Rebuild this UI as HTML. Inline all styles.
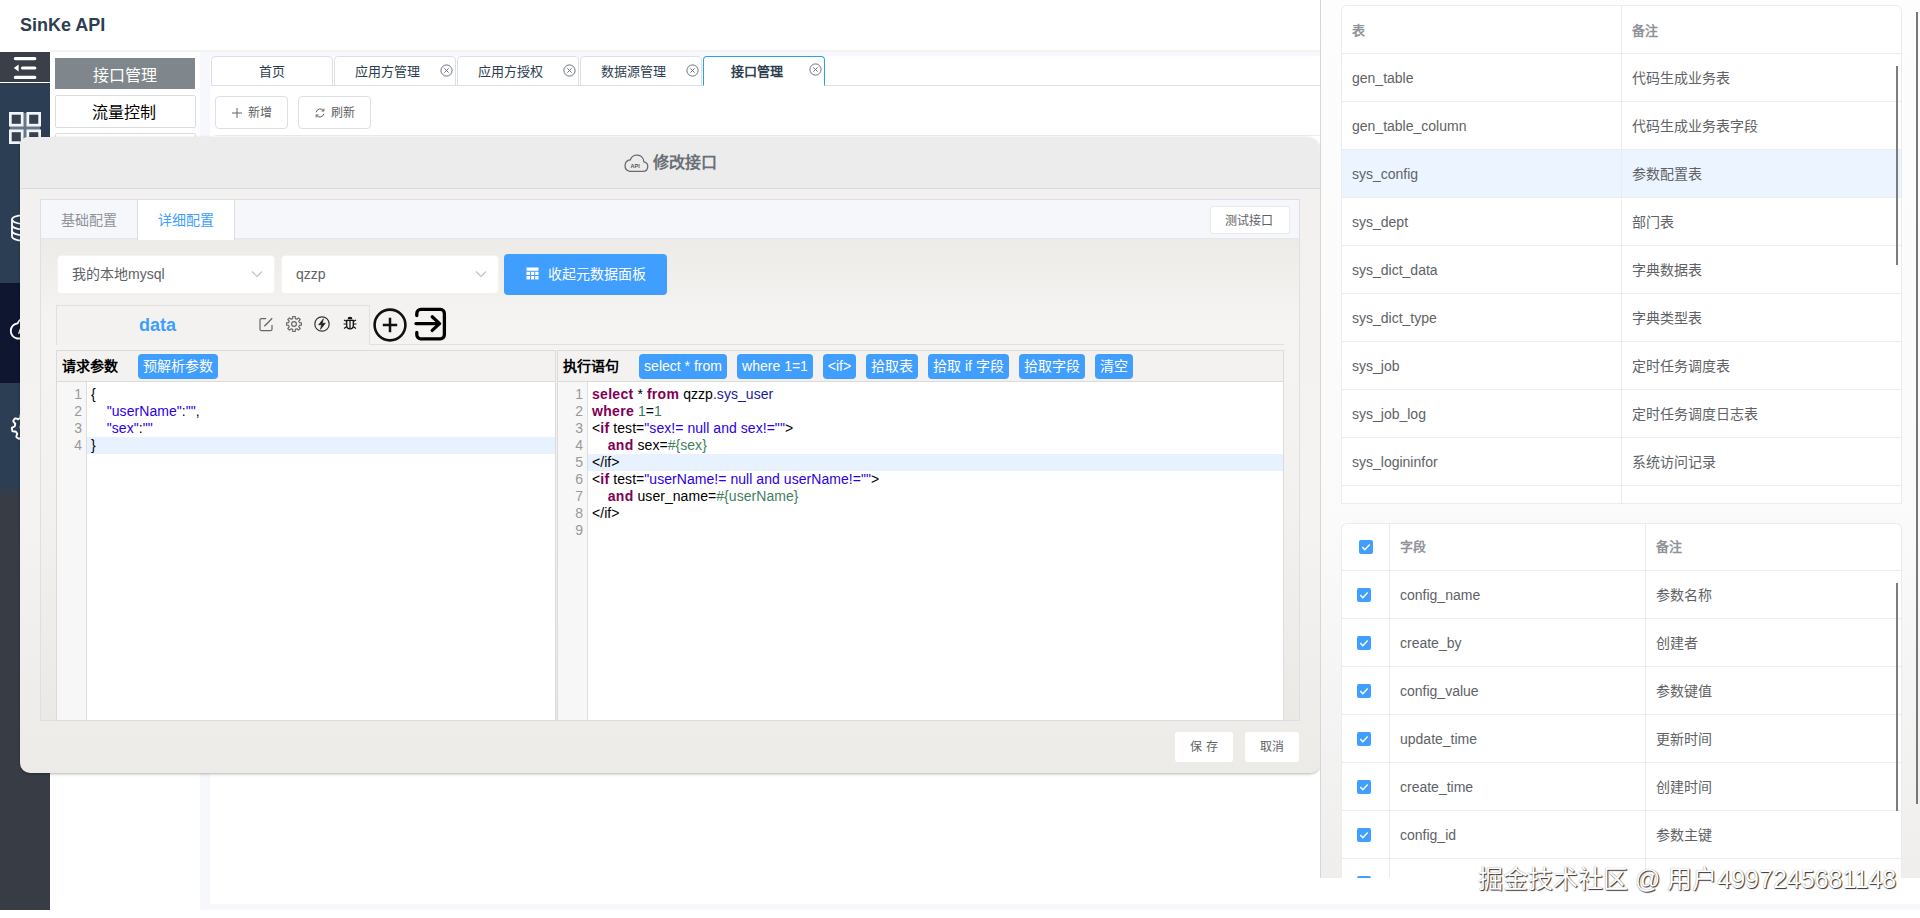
<!DOCTYPE html>
<html lang="zh-CN">
<head>
<meta charset="utf-8">
<title>SinKe API</title>
<style>
*{box-sizing:border-box;margin:0;padding:0}
html,body{width:1920px;height:918px;overflow:hidden;background:#fff}
body{position:relative;font-family:"Liberation Sans",sans-serif;font-size:14px;color:#606266}
.abs{position:absolute}
/* ---------- header ---------- */
#logo{left:20px;top:15px;font-size:18px;line-height:20px;font-weight:bold;color:#2c3e50;white-space:nowrap}
#hline{left:50px;top:50px;width:1270px;height:2px;background:#f3f3f3}
/* ---------- sidebar ---------- */
#side{left:0;top:52px;width:50px;height:858px;background:#373c45}
#side .s1{left:0;top:0;width:50px;height:30px;background:#3a3f48}
#side .s2{left:0;top:30px;width:50px;height:1px;background:#fff}
#side .s3{left:0;top:31px;width:50px;height:400px;background:#2c3e54}
#side .s4{left:0;top:231px;width:50px;height:100px;background:#0e1630}
#side .s5{left:0;top:431px;width:50px;height:14px;background:linear-gradient(#2c3e54,#373c45)}
/* ---------- menu panel ---------- */
#menu{left:50px;top:52px;width:150px;height:858px;background:#fff}
.mitem{left:5px;width:141px;height:33px;border:1px solid #dcdcdc;border-radius:2px;font-size:16px;line-height:31px;text-align:center;color:#000;background:#fff;white-space:nowrap}
.mitem.on{background:#80878c;border-color:#80878c;color:#fff}
/* ---------- main ---------- */
#main{left:200px;top:52px;width:1720px;height:858px;background:#f6f8fd}
#mainin{left:10px;top:4px;width:1710px;height:848px;background:#fff}
.tab{top:56px;width:122px;height:30px;border:1px solid #dcdfe6;border-radius:4px 4px 0 0;background:#fff;font-size:13px;line-height:28px;color:#2c3e50;white-space:nowrap}
.tab span{position:absolute;top:1px}
.tab.on{border-color:#2aa3dc;border-bottom-color:#fff;font-weight:bold}
#tabline{left:211px;top:85px;width:1109px;height:1px;background:#dcdfe6}
.tbtn{top:96px;width:73px;height:33px;border:1px solid #dcdfe6;border-radius:4px;background:#fff;font-size:12px;line-height:32px;color:#606266;white-space:nowrap}
#gridline{left:215px;top:135px;width:1105px;height:1px;background:#ececec}
/* ---------- modal ---------- */
#modal{left:20px;top:137px;width:1300px;height:636px;border-radius:8px 14px 10px 10px;background:linear-gradient(to bottom,#ececec 0,#ececec 51px,#f2f1ef 52px,#f4f3f2 60%,#ecebe8 100%);box-shadow:0 1px 3px rgba(0,0,0,.3)}
#mtitle{left:633px;top:15px;font-size:16px;line-height:22px;font-weight:bold;color:#6b6f76;white-space:nowrap}
#mdiv{left:0;top:51px;width:1300px;height:1px;background:#dddbd9}
#card{left:20px;top:62px;width:1260px;height:522px;border:1px solid #dcdfe6;background:linear-gradient(to bottom,#edebe8 0,#edebe8 40px,#f5f4f2 24%,#f2f1ef 60%,#ebe9e6 100%)}
#cardhd{left:0;top:0;width:1258px;height:39px;background:#f5f7fa;border-bottom:1px solid #e4e7ed}
.ctab{top:0;height:39px;width:97px;font-size:14px;line-height:40px;text-align:center;color:#909399;white-space:nowrap}
.ctab.on{background:#fff;color:#409eff;border-left:1px solid #dcdfe6;border-right:1px solid #dcdfe6;height:40px}
.wbtn{background:#fff;border:1px solid #e3e3e3;border-radius:3px;font-size:12px;color:#606266;text-align:center;white-space:nowrap}
.sel{top:255px;width:218px;height:38px;background:#fff;border:1px solid #e6e6e6;border-radius:4px;font-size:14px;line-height:36px;color:#606266;padding-left:15px;white-space:nowrap}
#bluebtn{left:504px;top:254px;width:163px;height:40px;background:#409eff;border-radius:4px;color:#fff;font-size:14px;line-height:40px;white-space:nowrap}

/* ---------- modal body ---------- */
.msel{top:117.500px;width:218px;height:39px;background:#fff;border:1px solid #f4f3f2;border-radius:4px;font-size:14px;line-height:36px;color:#606266;white-space:nowrap}
.msel span{position:absolute;left:14.500px;top:0.500px}
.msel svg{position:absolute;right:9.500px;top:11px}
#bluebtn{left:484px;top:116.500px;width:163px;height:41px;background:#409eff;border-radius:4px;color:#fff;font-size:14px;line-height:40px;white-space:nowrap}
#dtab{left:36px;top:168px;width:314px;height:40px;background:#f3f2f1;border:1px solid #e2e0de;border-bottom:none}
#dtabline{left:349px;top:207px;width:915px;height:1px;background:#e2e0de}
#dname{left:82px;top:8px;font-size:18px;line-height:22px;font-weight:bold;color:#409eff}
.pane{top:213px;height:371px;border:1px solid #dddbd9;background:#fff}
.phd{left:0;top:0;height:31px;background:#f3f2f1;border-bottom:1px solid #dddbd9}
.ptitle{top:0;font-size:14px;line-height:31px;font-weight:bold;color:#000;white-space:nowrap}
.bbtn{top:3px;height:25px;background:#409eff;border-radius:4px;color:#fff;font-size:14px;line-height:25px;text-align:center;white-space:nowrap}
.gut{left:0;top:31px;background:#f7f7f7;border-right:1px solid #ddd}
.code{top:35px;font-size:14px;line-height:17px;color:#000;white-space:pre;letter-spacing:.05px}
.ln{top:35px;font-size:14px;line-height:17px;color:#999;text-align:right;white-space:pre}
.act{height:17px;background:#e8f2ff}
.k{color:#7f0055;font-weight:bold;letter-spacing:.3px}.v2{color:#1a1aa0}.st{color:#2a00e6}.cm{color:#3f7f5f}.nu{color:#3a7a5c}
/* ---------- drawer ---------- */
.tb{background:#fff;overflow:hidden;border:1px solid #ebecf0}
.tr{left:0;height:48px;border-bottom:1px solid #ebecf0;width:100%}
.tr.hl{background:#ecf5ff}
.td{top:0;height:47px;line-height:49px;font-size:14px;color:#606266;white-space:nowrap;padding-left:10px;border-right:1px solid #ebecf0}
.th{font-size:13px;font-weight:bold;color:#909399}.th2{line-height:47px}
.ck{width:14px;height:14px;background:#409eff;border-radius:2px}
.vbar{width:2px;background:#7d7d7d}
#wm{left:1478px;top:864px;font-size:25px;line-height:30px;color:#fff;white-space:nowrap;text-shadow:1px 1px 1px rgba(0,0,0,.8),0 0 1px rgba(0,0,0,.45)}

#drawer{left:1320px;top:0;width:600px;height:878px;background:linear-gradient(to bottom,#fdfdfd 0%,#fafafa 60%,#efeeed 100%);border-left:1px solid #d6d6d6}
</style>
</head>
<body>

<!-- header -->
<div id="logo" class="abs">SinKe API</div>
<div id="hline" class="abs"></div>

<!-- sidebar -->
<div id="side" class="abs">
  <div class="abs s3"></div>
  <div class="abs s4"></div>
  <div class="abs s5"></div>
  <div class="abs s1"></div>
  <div class="abs s2"></div>
  
  <svg class="abs" style="left:13px;top:4px" width="25" height="24" viewBox="0 0 25 24"><path d="M2.400 2.600h19.400M9.500 12h12.300M2.400 21.400h19.400" stroke="#fff" stroke-width="3.200" stroke-linecap="round" fill="none"/><path d="M0.800 12l4.800-3.400v6.800z" fill="#fff"/></svg>
  <svg class="abs" style="left:9px;top:59.700px" width="32" height="32" viewBox="0 0 32 32"><rect x="1" y="1" width="30" height="30" fill="#69768a"/><g fill="#36424f" stroke="#f1f5f9" stroke-width="2.700"><rect x="1.350" y="1.350" width="11.800" height="11.800"/><rect x="18.850" y="1.350" width="11.800" height="11.800"/><rect x="1.350" y="18.850" width="11.800" height="11.800"/><rect x="18.850" y="18.850" width="11.800" height="11.800"/></g></svg>
  <svg class="abs" style="left:10px;top:162px" width="26" height="28" viewBox="0 0 26 28"><g fill="none" stroke="#fff" stroke-width="1.800"><ellipse cx="13" cy="5.500" rx="11" ry="4.200"/><path d="M2 5.500v17c0 2.300 4.900 4.200 11 4.200s11-1.900 11-4.200v-17"/><path d="M2 11.200c0 2.300 4.900 4.200 11 4.200s11-1.900 11-4.200M2 16.900c0 2.300 4.900 4.200 11 4.200s11-1.900 11-4.200"/></g></svg>
  <svg class="abs" style="left:8px;top:263px" width="34" height="26" viewBox="0 0 34 26"><path d="M9 23.500h17.500a6.500 6.500 0 0 0 1.300-12.900A9.500 9.500 0 0 0 9.600 8.300 7.700 7.700 0 0 0 9 23.500z" fill="none" stroke="#fff" stroke-width="1.800"/><path d="M10.600 19l2.200-6.500 2.200 6.500M11.400 16.800h2.800" fill="none" stroke="#fff" stroke-width="1.200"/></svg>
  <svg class="abs" style="left:10px;top:359.600px" width="30" height="30" viewBox="0 0 30 30"><path d="M25.8 19.5 L26.6 20.3 L26.8 21.0 L26.5 21.4 L26.3 21.9 L26.0 22.3 L25.7 22.8 L25.4 23.2 L25.0 23.6 L24.3 23.6 L23.3 23.3 L22.2 22.8 L21.6 22.8 L21.3 23.0 L21.0 23.3 L20.7 23.5 L20.3 23.7 L20.0 23.9 L19.6 24.1 L19.5 24.7 L19.5 25.8 L19.4 26.9 L19.1 27.6 L18.6 27.7 L18.1 27.8 L17.6 27.9 L17.1 28.0 L16.6 28.1 L16.0 28.2 L15.5 27.7 L15.0 26.7 L14.6 25.7 L14.2 25.2 L13.8 25.1 L13.4 25.1 L13.0 25.0 L12.6 24.9 L12.2 24.8 L11.8 24.7 L11.3 25.0 L10.5 25.8 L9.7 26.6 L9.0 26.8 L8.6 26.5 L8.1 26.3 L7.7 26.0 L7.2 25.7 L6.8 25.4 L6.4 25.0 L6.4 24.3 L6.7 23.3 L7.2 22.2 L7.2 21.6 L7.0 21.3 L6.7 21.0 L6.5 20.7 L6.3 20.3 L6.1 20.0 L5.9 19.6 L5.3 19.5 L4.2 19.5 L3.1 19.4 L2.4 19.1 L2.3 18.6 L2.2 18.1 L2.1 17.6 L2.0 17.1 L1.9 16.6 L1.8 16.0 L2.3 15.5 L3.3 15.0 L4.3 14.6 L4.8 14.2 L4.9 13.8 L4.9 13.4 L5.0 13.0 L5.1 12.6 L5.2 12.2 L5.3 11.8 L5.0 11.3 L4.2 10.5 L3.4 9.7 L3.2 9.0 L3.5 8.6 L3.7 8.1 L4.0 7.7 L4.3 7.2 L4.6 6.8 L5.0 6.4 L5.7 6.4 L6.7 6.7 L7.8 7.2 L8.4 7.2 L8.7 7.0 L9.0 6.7 L9.3 6.5 L9.7 6.3 L10.0 6.1 L10.4 5.9 L10.5 5.3 L10.5 4.2 L10.6 3.1 L10.9 2.4 L11.4 2.3 L11.9 2.2 L12.4 2.1 L12.9 2.0 L13.4 1.9 L14.0 1.8 L14.5 2.3 L15.0 3.3 L15.4 4.3 L15.8 4.8 L16.2 4.9 L16.6 4.9 L17.0 5.0 L17.4 5.1 L17.8 5.2 L18.2 5.3 L18.7 5.0 L19.5 4.2 L20.3 3.4 L21.0 3.2 L21.4 3.5 L21.9 3.7 L22.3 4.0 L22.8 4.3 L23.2 4.6 L23.6 5.0 L23.6 5.7 L23.3 6.7 L22.8 7.8 L22.8 8.4 L23.0 8.7 L23.3 9.0 L23.5 9.3 L23.7 9.7 L23.9 10.0 L24.1 10.4 L24.7 10.5 L25.8 10.5 L26.9 10.6 L27.6 10.9 L27.7 11.4 L27.8 11.9 L27.9 12.4 L28.0 12.9 L28.1 13.4 L28.2 14.0 L27.7 14.5 L26.7 15.0 L25.7 15.4 L25.2 15.8 L25.1 16.2 L25.1 16.6 L25.0 17.0 L24.9 17.4 L24.8 17.8 L24.7 18.2 L25.0 18.7Z" fill="none" stroke="#fff" stroke-width="1.900" stroke-linejoin="round"/><circle cx="15" cy="15" r="4.500" fill="none" stroke="#fff" stroke-width="1.900"/></svg>

</div>

<!-- menu panel -->
<div id="menu" class="abs">
  <div class="abs mitem on" style="top:6px;height:31px;left:5px;width:140px;line-height:33px;border-radius:0">接口管理</div>
  <div class="abs mitem" style="top:43px;line-height:34px;text-indent:-3px">流量控制</div>
  <div class="abs mitem" style="top:81px"></div>
</div>

<!-- main -->
<div id="main" class="abs"><div id="mainin" class="abs"></div></div>
<div id="tabline" class="abs"></div>

<div class="abs tab" style="left:211px"><span style="left:47px">首页</span></div>
<div class="abs tab" style="left:334px"><span style="left:20px">应用方管理</span><svg class="abs" style="left:105px;top:7px" width="13" height="13" viewBox="0 0 13 13"><circle cx="6.5" cy="6.5" r="5.6" fill="none" stroke="#6b7480" stroke-width="1"/><path d="M4.4 4.4L8.6 8.6M8.6 4.4L4.4 8.6" stroke="#6b7480" stroke-width="1" fill="none"/></svg></div>
<div class="abs tab" style="left:457px"><span style="left:20px">应用方授权</span><svg class="abs" style="left:105px;top:7px" width="13" height="13" viewBox="0 0 13 13"><circle cx="6.5" cy="6.5" r="5.6" fill="none" stroke="#6b7480" stroke-width="1"/><path d="M4.4 4.4L8.6 8.6M8.6 4.4L4.4 8.6" stroke="#6b7480" stroke-width="1" fill="none"/></svg></div>
<div class="abs tab" style="left:580px"><span style="left:20px">数据源管理</span><svg class="abs" style="left:105px;top:7px" width="13" height="13" viewBox="0 0 13 13"><circle cx="6.5" cy="6.5" r="5.6" fill="none" stroke="#6b7480" stroke-width="1"/><path d="M4.4 4.4L8.6 8.6M8.6 4.4L4.4 8.6" stroke="#6b7480" stroke-width="1" fill="none"/></svg></div>
<div class="abs tab on" style="left:703px;width:122px"><span style="left:27px">接口管理</span><svg class="abs" style="left:105px;top:6px" width="13" height="13" viewBox="0 0 13 13"><circle cx="6.5" cy="6.5" r="5.6" fill="none" stroke="#6b7480" stroke-width="1"/><path d="M4.4 4.4L8.6 8.6M8.6 4.4L4.4 8.6" stroke="#6b7480" stroke-width="1" fill="none"/></svg></div>


<div class="abs tbtn" style="left:215px"><svg class="abs" style="left:15px;top:10px" width="12" height="12" viewBox="0 0 12 12"><path d="M6 1v10M1 6h10" stroke="#606266" stroke-width="1" fill="none"/></svg><span class="abs" style="left:32px;top:0">新增</span></div>
<div class="abs tbtn" style="left:298px"><svg class="abs" style="left:15px;top:10px" width="12" height="12" viewBox="0 0 12 12"><path d="M2.2 5.2A4 4 0 0 1 9.4 3.6M9.8 6.8A4 4 0 0 1 2.6 8.4" stroke="#606266" stroke-width="1" fill="none"/><path d="M9.9 1.6v2.4H7.5M2.1 10.4V8h2.4" stroke="#606266" stroke-width="1" fill="none"/></svg><span class="abs" style="left:32px;top:0">刷新</span></div>

<div id="gridline" class="abs"></div>

<!-- modal -->
<div id="modal" class="abs">
  <div id="mtitle" class="abs">修改接口</div>
  <div id="mdiv" class="abs"></div>
  <div id="card" class="abs">
    <div id="cardhd" class="abs"></div>
    <div class="abs ctab" style="left:0;text-indent:-1px">基础配置</div>
    <div class="abs ctab on" style="left:96px;width:98px">详细配置</div>
  </div>
  
  <div class="abs wbtn" style="left:1190px;top:68.500px;width:80px;height:28px;line-height:28px;text-indent:-2px;border-color:#e9e9e9">测试接口</div>
  <div class="abs msel" style="left:36.500px"><span>我的本地mysql</span><svg width="14" height="14" viewBox="0 0 14 14"><path d="M2 4.500l5 5 5-5" fill="none" stroke="#c0c4cc" stroke-width="1.200"/></svg></div>
  <div class="abs msel" style="left:260.500px"><span>qzzp</span><svg width="14" height="14" viewBox="0 0 14 14"><path d="M2 4.500l5 5 5-5" fill="none" stroke="#c0c4cc" stroke-width="1.200"/></svg></div>
  <div id="bluebtn" class="abs"><svg class="abs" style="left:22px;top:13px" width="13" height="13" viewBox="0 0 13 13"><path d="M0.500 0.500h12v12h-12z" fill="#fff"/><path d="M0 4.300h13M4.600 4.300v8.700M8.700 4.300v8.700M0 8.500h13" stroke="#409eff" stroke-width="1" fill="none"/></svg><span class="abs" style="left:44px;top:0">收起元数据面板</span></div>

  <div id="dtab" class="abs"><div id="dname" class="abs">data</div>
    <!--DICONS-->
  </div>
  <div id="dtabline" class="abs"></div>
  
  <svg class="abs" style="left:603px;top:16px" width="26" height="20" viewBox="0 0 26 20"><path d="M6.600 18.400h13.300a4.800 4.800 0 0 0 1-9.500A7 7 0 0 0 7.300 6.800 5.900 5.900 0 0 0 6.600 18.400z" fill="none" stroke="#6b6b6b" stroke-width="1.300"/><text x="7.600" y="14.600" font-size="5.500" font-weight="bold" fill="#555" font-family="Liberation Sans,sans-serif">API</text></svg>
  <svg class="abs" style="left:239px;top:180px" width="15" height="15" viewBox="0 0 15 15"><path d="M7.200 1.600H2.400a1.400 1.400 0 0 0-1.400 1.400v9.200a1.400 1.400 0 0 0 1.400 1.400h9.200a1.400 1.400 0 0 0 1.400-1.400V8" fill="none" stroke="#666" stroke-width="1.200"/><path d="M5.400 9.200L13.200 1.200" fill="none" stroke="#666" stroke-width="1.300"/></svg>
  <svg class="abs" style="left:266px;top:179px" width="16" height="16" viewBox="0 0 16 16"><path d="M6.81 0.49 L9.19 0.49 L9.39 2.58 L10.85 3.18 L12.47 1.85 L14.15 3.53 L12.82 5.15 L13.42 6.61 L15.51 6.81 L15.51 9.19 L13.42 9.39 L12.82 10.85 L14.15 12.47 L12.47 14.15 L10.85 12.82 L9.39 13.42 L9.19 15.51 L6.81 15.51 L6.61 13.42 L5.15 12.82 L3.53 14.15 L1.85 12.47 L3.18 10.85 L2.58 9.39 L0.49 9.19 L0.49 6.81 L2.58 6.61 L3.18 5.15 L1.85 3.53 L3.53 1.85 L5.15 3.18 L6.61 2.58Z" fill="none" stroke="#666" stroke-width="1.200" stroke-linejoin="round"/><circle cx="8" cy="8" r="2.400" fill="none" stroke="#666" stroke-width="1.200"/></svg>
  <svg class="abs" style="left:294px;top:179px" width="16" height="16" viewBox="0 0 16 16"><circle cx="8" cy="8" r="7.200" fill="none" stroke="#333" stroke-width="1.200"/><path d="M9.400 2.800L4.600 8.800h3l-1.200 4.600 5-6.200H8.300z" fill="#222" stroke="#222" stroke-width=".6" stroke-linejoin="round"/></svg>
  <svg class="abs" style="left:323px;top:179px" width="14" height="15" viewBox="0 0 14 15"><path d="M4.600 3.200a2.400 2.400 0 0 1 4.800 0z" fill="#111"/><path d="M3.700 4.300h6.600v5.200a3.300 3.300 0 0 1-6.600 0z" fill="none" stroke="#111" stroke-width="1.300"/><path d="M7 4.300v8.400M0.600 8h3M10.400 8h3M1 4l2.700 1.600M13 4l-2.700 1.600M1 12.400l2.900-1.900M13 12.400l-2.900-1.900" fill="none" stroke="#111" stroke-width="1.200"/></svg>
  <svg class="abs" style="left:352px;top:170px" width="36" height="36" viewBox="0 0 36 36"><circle cx="18" cy="18" r="15.400" fill="none" stroke="#111" stroke-width="2.600"/><path d="M10.800 18h14.400M18 10.800v14.400" stroke="#111" stroke-width="2.500" fill="none"/></svg>
  <svg class="abs" style="left:394px;top:169px" width="34" height="36" viewBox="0 0 34 36"><path d="M2.800 9.600V7.400a4 4 0 0 1 4-4h19.600a4 4 0 0 1 4 4v21.400a4 4 0 0 1-4 4H6.800a4 4 0 0 1-4-4v-2.400" fill="none" stroke="#000" stroke-width="3.300" stroke-linecap="round"/><path d="M2 17.600h23M18.200 10.800l7.400 6.800-7.400 6.800" fill="none" stroke="#000" stroke-width="3.300" stroke-linecap="round" stroke-linejoin="round"/></svg>


  <!-- left pane -->
  <div class="abs pane" style="left:36px;width:500px">
    <div class="abs phd" style="width:498px"></div>
    <div class="abs ptitle" style="left:5px">请求参数</div>
    <div class="abs bbtn" style="left:81px;width:80px">预解析参数</div>
    <div class="abs gut" style="width:30px;height:338px"></div>
    <div class="abs act" style="left:30px;top:86px;width:468px"></div>
    <div class="abs ln" style="left:0;width:25px">1
2
3
4</div>
    <div class="abs code" style="left:34px">{
    <span class="st">"userName"</span>:<span class="st">""</span>,
    <span class="st">"sex"</span>:<span class="st">""</span>
}</div>
  </div>

  <!-- right pane -->
  <div class="abs pane" style="left:537px;width:727px">
    <div class="abs phd" style="width:725px"></div>
    <div class="abs ptitle" style="left:5px">执行语句</div>
    <div class="abs bbtn" style="left:81px;width:88px">select * from</div>
    <div class="abs bbtn" style="left:179px;width:76px">where 1=1</div>
    <div class="abs bbtn" style="left:265px;width:33px">&lt;if&gt;</div>
    <div class="abs bbtn" style="left:308px;width:52px">拾取表</div>
    <div class="abs bbtn" style="left:370px;width:81px">拾取 if 字段</div>
    <div class="abs bbtn" style="left:461px;width:66px">拾取字段</div>
    <div class="abs bbtn" style="left:537px;width:38px">清空</div>
    <div class="abs gut" style="width:30px;height:338px"></div>
    <div class="abs act" style="left:30px;top:103px;width:695px"></div>
    <div class="abs ln" style="left:0;width:25px">1
2
3
4
5
6
7
8
9</div>
    <div class="abs code" style="left:34px"><span class="k">select</span> * <span class="k">from</span> qzzp<span class="v2">.sys_user</span>
<span class="k">where</span> <span class="nu">1</span>=<span class="nu">1</span>
&lt;<span class="k">if</span> test=<span class="st">"sex!= null and sex!="</span><span class="st">"</span>&gt;
    <span class="k">and</span> sex=<span class="cm">#{sex}</span>
&lt;/if&gt;
&lt;<span class="k">if</span> test=<span class="st">"userName!= null and userName!="</span><span class="st">"</span>&gt;
    <span class="k">and</span> user_name=<span class="cm">#{userName}</span>
&lt;/if&gt;
</div>
  </div>

  <div class="abs wbtn" style="left:1155px;top:595px;width:58px;height:30px;line-height:31px;border:none">保 存</div>
  <div class="abs wbtn" style="left:1225px;top:595px;width:54px;height:30px;line-height:31px;border:none">取消</div>

</div>

<!-- drawer -->
<div id="drawer" class="abs">
<div class="abs tb" style="left:20px;top:5px;width:561px;height:499px;border-radius:6px 6px 0 0">
  <div class="abs tr" style="top:0px"><div class="abs td th" style="left:0;width:280px">表</div><div class="abs td th" style="left:280px;width:279px;border-right:none">备注</div></div>
  <div class="abs tr" style="top:48px"><div class="abs td" style="left:0;width:280px">gen_table</div><div class="abs td" style="left:280px;width:279px;border-right:none">代码生成业务表</div></div>
  <div class="abs tr" style="top:96px"><div class="abs td" style="left:0;width:280px">gen_table_column</div><div class="abs td" style="left:280px;width:279px;border-right:none">代码生成业务表字段</div></div>
  <div class="abs tr hl" style="top:144px"><div class="abs td" style="left:0;width:280px">sys_config</div><div class="abs td" style="left:280px;width:279px;border-right:none">参数配置表</div></div>
  <div class="abs tr" style="top:192px"><div class="abs td" style="left:0;width:280px">sys_dept</div><div class="abs td" style="left:280px;width:279px;border-right:none">部门表</div></div>
  <div class="abs tr" style="top:240px"><div class="abs td" style="left:0;width:280px">sys_dict_data</div><div class="abs td" style="left:280px;width:279px;border-right:none">字典数据表</div></div>
  <div class="abs tr" style="top:288px"><div class="abs td" style="left:0;width:280px">sys_dict_type</div><div class="abs td" style="left:280px;width:279px;border-right:none">字典类型表</div></div>
  <div class="abs tr" style="top:336px"><div class="abs td" style="left:0;width:280px">sys_job</div><div class="abs td" style="left:280px;width:279px;border-right:none">定时任务调度表</div></div>
  <div class="abs tr" style="top:384px"><div class="abs td" style="left:0;width:280px">sys_job_log</div><div class="abs td" style="left:280px;width:279px;border-right:none">定时任务调度日志表</div></div>
  <div class="abs tr" style="top:432px"><div class="abs td" style="left:0;width:280px">sys_logininfor</div><div class="abs td" style="left:280px;width:279px;border-right:none">系统访问记录</div></div>
  <div class="abs tr" style="top:480px"><div class="abs td" style="left:0;width:280px"></div><div class="abs td" style="left:280px;width:279px;border-right:none"></div></div>
</div>
<div class="abs tb" style="left:20px;top:523px;width:561px;height:355px;border-radius:6px 6px 0 0;border-bottom:none">
  <div class="abs tr" style="top:-1px"><div class="abs td" style="left:0;width:48px;padding:0"><svg class="abs" style="left:17px;top:17px" width="14" height="14" viewBox="0 0 14 14"><rect width="14" height="14" rx="2" fill="#409eff"/><path d="M3.300 7.100l2.500 2.600 4.900-5.300" fill="none" stroke="#fff" stroke-width="1.400"/></svg></div><div class="abs td th th2" style="left:48px;width:256px">字段</div><div class="abs td th th2" style="left:304px;width:255px;border-right:none">备注</div></div>
  <div class="abs tr" style="top:47px"><div class="abs td" style="left:0;width:48px;padding:0"><svg class="abs" style="left:15px;top:17px" width="14" height="14" viewBox="0 0 14 14"><rect width="14" height="14" rx="2" fill="#409eff"/><path d="M3.300 7.100l2.500 2.600 4.900-5.300" fill="none" stroke="#fff" stroke-width="1.400"/></svg></div><div class="abs td" style="left:48px;width:256px">config_name</div><div class="abs td" style="left:304px;width:255px;border-right:none">参数名称</div></div>
  <div class="abs tr" style="top:95px"><div class="abs td" style="left:0;width:48px;padding:0"><svg class="abs" style="left:15px;top:17px" width="14" height="14" viewBox="0 0 14 14"><rect width="14" height="14" rx="2" fill="#409eff"/><path d="M3.300 7.100l2.500 2.600 4.900-5.300" fill="none" stroke="#fff" stroke-width="1.400"/></svg></div><div class="abs td" style="left:48px;width:256px">create_by</div><div class="abs td" style="left:304px;width:255px;border-right:none">创建者</div></div>
  <div class="abs tr" style="top:143px"><div class="abs td" style="left:0;width:48px;padding:0"><svg class="abs" style="left:15px;top:17px" width="14" height="14" viewBox="0 0 14 14"><rect width="14" height="14" rx="2" fill="#409eff"/><path d="M3.300 7.100l2.500 2.600 4.900-5.300" fill="none" stroke="#fff" stroke-width="1.400"/></svg></div><div class="abs td" style="left:48px;width:256px">config_value</div><div class="abs td" style="left:304px;width:255px;border-right:none">参数键值</div></div>
  <div class="abs tr" style="top:191px"><div class="abs td" style="left:0;width:48px;padding:0"><svg class="abs" style="left:15px;top:17px" width="14" height="14" viewBox="0 0 14 14"><rect width="14" height="14" rx="2" fill="#409eff"/><path d="M3.300 7.100l2.500 2.600 4.900-5.300" fill="none" stroke="#fff" stroke-width="1.400"/></svg></div><div class="abs td" style="left:48px;width:256px">update_time</div><div class="abs td" style="left:304px;width:255px;border-right:none">更新时间</div></div>
  <div class="abs tr" style="top:239px"><div class="abs td" style="left:0;width:48px;padding:0"><svg class="abs" style="left:15px;top:17px" width="14" height="14" viewBox="0 0 14 14"><rect width="14" height="14" rx="2" fill="#409eff"/><path d="M3.300 7.100l2.500 2.600 4.900-5.300" fill="none" stroke="#fff" stroke-width="1.400"/></svg></div><div class="abs td" style="left:48px;width:256px">create_time</div><div class="abs td" style="left:304px;width:255px;border-right:none">创建时间</div></div>
  <div class="abs tr" style="top:287px"><div class="abs td" style="left:0;width:48px;padding:0"><svg class="abs" style="left:15px;top:17px" width="14" height="14" viewBox="0 0 14 14"><rect width="14" height="14" rx="2" fill="#409eff"/><path d="M3.300 7.100l2.500 2.600 4.900-5.300" fill="none" stroke="#fff" stroke-width="1.400"/></svg></div><div class="abs td" style="left:48px;width:256px">config_id</div><div class="abs td" style="left:304px;width:255px;border-right:none">参数主键</div></div>
  <div class="abs tr" style="top:335px"><div class="abs td" style="left:0;width:48px;padding:0"><svg class="abs" style="left:15px;top:17px" width="14" height="14" viewBox="0 0 14 14"><rect width="14" height="14" rx="2" fill="#409eff"/><path d="M3.300 7.100l2.500 2.600 4.900-5.300" fill="none" stroke="#fff" stroke-width="1.400"/></svg></div><div class="abs td" style="left:48px;width:256px"></div><div class="abs td" style="left:304px;width:255px;border-right:none"></div></div>
</div>
<div class="abs vbar" style="left:575px;top:66px;height:199px"></div>
<div class="abs vbar" style="left:575px;top:583px;height:228px"></div>
<div class="abs vbar" style="left:595px;top:12px;height:792px;background:#777"></div>
</div>

<div id="wm" class="abs">掘金技术社区 @ 用户4997245681148</div>
</body>
</html>
